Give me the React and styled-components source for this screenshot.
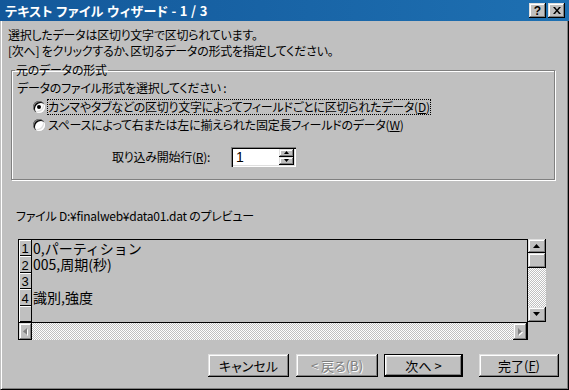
import React from 'react'
import styled, { createGlobalStyle, css } from 'styled-components'

const GlobalStyle = createGlobalStyle`
  html, body {
    margin: 0;
    padding: 0;
    background: #c0c0c0;
  }
  body {
    font-family: "Noto Sans CJK JP", "Liberation Sans", sans-serif;
    font-feature-settings: "palt";
    color: #000;
  }
`

const raised = css`
  background: #c0c0c0;
  box-shadow: inset -1px -1px #000, inset 1px 1px #dfdfdf,
    inset -2px -2px #808080, inset 2px 2px #fff;
`

const dither = css`
  background-color: #c0c0c0;
  background-image: conic-gradient(#fff 25%, #c0c0c0 0 50%, #fff 0 75%, #c0c0c0 0);
  background-size: 2px 2px;
`

const Window = styled.div`
  width: 569px;
  height: 390px;
  display: flex;
  flex-direction: column;
  background: #c0c0c0;
  overflow: hidden;
`

const TitleBar = styled.div`
  height: 21px;
  flex: none;
  display: flex;
  align-items: center;
  justify-content: space-between;
  padding: 0 4px 0 5px;
  background: linear-gradient(90deg, #13589a, #1e70b2);
  color: #fff;
  font-size: 13px;
  font-weight: bold;
  letter-spacing: 0.3px;
`

const CaptionButtons = styled.div`
  display: flex;
  gap: 2px;
`

const CaptionButton = styled.div`
  ${raised};
  width: 17px;
  height: 15px;
  display: flex;
  align-items: center;
  justify-content: center;
  color: #000;
  font-family: "Liberation Sans", sans-serif;
  font-size: 12px;
  font-weight: bold;
`

const Body = styled.div`
  flex: 1;
  padding: 6px 0 0 7px;
  border-left: 1px solid #c0c0c0;
  border-right: 1px solid #000;
  border-bottom: 1px solid #000;
  box-shadow: inset 1px 0 #fff, inset -1px -1px #808080;
  font-size: 12px;
  line-height: 16px;
  letter-spacing: -0.25px;
`

const Intro = styled.p`
  margin: 0;
`

const Group = styled.fieldset`
  box-sizing: border-box;
  width: 544px;
  margin: 3px 0 0 3px;
  padding: 0 0 12px 5px;
  border: 1px solid #808080;
  box-shadow: 1px 1px #fff, inset 1px 1px #fff;
`

const Legend = styled.legend`
  padding: 0 1px;
  margin-left: -2px;
  line-height: 16px;
`

const Hint = styled.div`
  margin-top: 2px;
`

const RadioList = styled.div`
  margin-top: 3px;
  padding-left: 16px;
  display: flex;
  flex-direction: column;
  gap: 2px;
`

const RadioRow = styled.label`
  display: flex;
  align-items: center;
  gap: 2px;
`

const RadioDot = styled.span`
  position: relative;
  width: 12px;
  height: 12px;
  flex: none;
  border-radius: 50%;
  background: #fff;
  box-shadow: inset 1px 1px #808080, inset 2px 2px #000,
    inset -1px -1px #fff, inset -2px -2px #dfdfdf;

  &::after {
    content: '';
    display: ${(p) => (p.checked ? 'block' : 'none')};
    position: absolute;
    left: 4px;
    top: 4px;
    width: 4px;
    height: 4px;
    border-radius: 50%;
    background: #000;
  }
`

const RadioText = styled.span`
  padding: 0 1px;
  outline: ${(p) => (p.focused ? '1px dotted #000' : 'none')};
  outline-offset: -1px;
  white-space: nowrap;
`

const Key = styled.u`
  text-underline-offset: 1px;
`

const SpinRow = styled.div`
  margin-top: 14px;
  display: flex;
  align-items: center;
`

const SpinLabel = styled.span`
  width: 119px;
  margin-left: 95px;
  flex: none;
`

const Spinner = styled.div`
  width: 65px;
  height: 20px;
  box-sizing: border-box;
  display: flex;
  background: #fff;
  box-shadow: inset 1px 1px #808080, inset 2px 2px #000,
    inset -1px -1px #fff, inset -2px -2px #dfdfdf;
  padding: 2px;
`

const SpinValue = styled.div`
  flex: 1;
  padding-left: 3px;
  font-family: "Liberation Sans", sans-serif;
  font-size: 14px;
  line-height: 16px;
`

const SpinButtons = styled.div`
  width: 15px;
  display: grid;
  grid-template-rows: 1fr 1fr;
`

const SmallButton = styled.div`
  ${raised};
  display: flex;
  align-items: center;
  justify-content: center;
`

const PreviewLabel = styled.div`
  margin: 28px 0 0 8px;
`

const PreviewArea = styled.div`
  margin: 15px 0 0 10px;
  display: grid;
  grid-template-columns: 510px 18px;
  grid-template-rows: 83px 18px;
`

const PreviewBox = styled.div`
  grid-row: 1 / 3;
  display: flex;
  flex-direction: column;
  border: 1px solid #000;
  border-bottom: none;
  background: #c0c0c0;
`

const Sheet = styled.div`
  height: 82px;
  display: grid;
  grid-template-rows: repeat(5, 1fr);
  border-bottom: 1px solid #000;
`

const SheetRow = styled.div`
  display: grid;
  grid-template-columns: 13px 1fr;
  min-height: 0;
`

const RowHead = styled.div`
  border-right: 1px solid #000;
  box-shadow: inset 1px 1px #fff, inset 0 -1px #000;
  display: flex;
  align-items: flex-end;
  justify-content: center;
  font-family: "Liberation Sans", sans-serif;
  font-size: 13px;
  line-height: 15px;
`

const Cell = styled.div`
  padding-left: 1px;
  font-family: "Noto Sans CJK JP", sans-serif;
  font-feature-settings: normal;
  letter-spacing: 0;
  font-size: 14px;
  line-height: 16px;
  white-space: nowrap;
`

const HScroll = styled.div`
  height: 17px;
  display: grid;
  grid-template-columns: 13px 1fr 14px;
  ${dither};
`

const VScroll = styled.div`
  display: grid;
  grid-template-rows: 14px 15px 1fr 15px;
  ${dither};
`

const ButtonRow = styled.div`
  margin-top: 14px;
  padding-right: 9px;
  display: flex;
  justify-content: flex-end;
`

const DialogButton = styled.div`
  ${raised};
  width: ${(p) => p.w}px;
  height: 23px;
  margin-left: ${(p) => p.gap}px;
  box-sizing: border-box;
  display: flex;
  align-items: center;
  justify-content: center;
  font-size: 13px;
  letter-spacing: 0;
  color: ${(p) => (p.disabled ? '#808080' : '#000')};
  text-shadow: ${(p) => (p.disabled ? '1px 1px #fff' : 'none')};
  ${(p) =>
    p.isDefault &&
    css`
      box-shadow: inset 0 0 0 1px #000, inset -2px -2px #000, inset 2px 2px #fff,
        inset -3px -3px #808080, inset 3px 3px #dfdfdf;
    `}
`

const shapes = {
  up: { w: 7, h: 4, pts: '3.5,0 7,4 0,4' },
  down: { w: 7, h: 4, pts: '0,0 7,0 3.5,4' },
  left: { w: 4, h: 7, pts: '4,0 4,7 0,3.5' },
  right: { w: 4, h: 7, pts: '0,0 4,3.5 0,7' },
  spinUp: { w: 5, h: 3, pts: '2.5,0 5,3 0,3' },
  spinDown: { w: 5, h: 3, pts: '0,0 5,0 2.5,3' },
}

const Arrow = ({ dir, disabled }) => {
  const s = shapes[dir]
  return (
    <svg width={s.w + 1} height={s.h + 1} viewBox={`0 0 ${s.w + 1} ${s.h + 1}`}>
      {disabled && <polygon points={s.pts} fill="#fff" transform="translate(1 1)" />}
      <polygon points={s.pts} fill={disabled ? '#808080' : '#000'} />
    </svg>
  )
}

const CloseGlyph = () => (
  <svg width="8" height="7" viewBox="0 0 8 7">
    <path d="M0 0h2l2 2.5L6 0h2L5 3.5 8 7H6L4 4.5 2 7H0l3-3.5z" fill="#000" />
  </svg>
)

const rows = [
  { n: '1', text: '0,パーティション' },
  { n: '2', text: '005,周期(秒)' },
  { n: '3', text: '' },
  { n: '4', text: '識別,強度' },
  { n: '', text: '' },
]

export default function App() {
  return (
    <Window>
      <GlobalStyle />
      <TitleBar>
        <span>テキスト ファイル ウィザード - 1 / 3</span>
        <CaptionButtons>
          <CaptionButton>?</CaptionButton>
          <CaptionButton>
            <CloseGlyph />
          </CaptionButton>
        </CaptionButtons>
      </TitleBar>

      <Body>
        <Intro>
          選択したデータは区切り文字で区切られています。
          <br />
          [次へ] をクリックするか、区切るデータの形式を指定してください。
        </Intro>

        <Group>
          <Legend>元のデータの形式</Legend>
          <Hint>データのファイル形式を選択してください :</Hint>
          <RadioList>
            <RadioRow>
              <RadioDot checked />
              <RadioText focused>
                カンマやタブなどの区切り文字によってフィールドごとに区切られたデータ(<Key>D</Key>)
              </RadioText>
            </RadioRow>
            <RadioRow>
              <RadioDot />
              <RadioText>
                スペースによって右または左に揃えられた固定長フィールドのデータ(<Key>W</Key>)
              </RadioText>
            </RadioRow>
          </RadioList>
          <SpinRow>
            <SpinLabel>
              取り込み開始行(<Key>R</Key>):
            </SpinLabel>
            <Spinner>
              <SpinValue>1</SpinValue>
              <SpinButtons>
                <SmallButton>
                  <Arrow dir="spinUp" />
                </SmallButton>
                <SmallButton>
                  <Arrow dir="spinDown" />
                </SmallButton>
              </SpinButtons>
            </Spinner>
          </SpinRow>
        </Group>

        <PreviewLabel>ファイル D:¥finalweb¥data01.dat のプレビュー</PreviewLabel>

        <PreviewArea>
          <PreviewBox>
            <Sheet>
              {rows.map((r, i) => (
                <SheetRow key={i}>
                  <RowHead>{r.n}</RowHead>
                  <Cell>{r.text}</Cell>
                </SheetRow>
              ))}
            </Sheet>
            <HScroll>
              <SmallButton>
                <Arrow dir="left" disabled />
              </SmallButton>
              <span />
              <SmallButton>
                <Arrow dir="right" disabled />
              </SmallButton>
            </HScroll>
          </PreviewBox>
          <VScroll>
            <SmallButton>
              <Arrow dir="up" />
            </SmallButton>
            <SmallButton />
            <span />
            <SmallButton>
              <Arrow dir="down" />
            </SmallButton>
          </VScroll>
        </PreviewArea>

        <ButtonRow>
          <DialogButton w={81} gap={0}>キャンセル</DialogButton>
          <DialogButton w={82} gap={7} disabled>
            &lt; 戻る(B)
          </DialogButton>
          <DialogButton w={79} gap={6} isDefault>
            次へ &gt;
          </DialogButton>
          <DialogButton w={80} gap={16}>
            完了(<Key>F</Key>)
          </DialogButton>
        </ButtonRow>
      </Body>
    </Window>
  )
}
